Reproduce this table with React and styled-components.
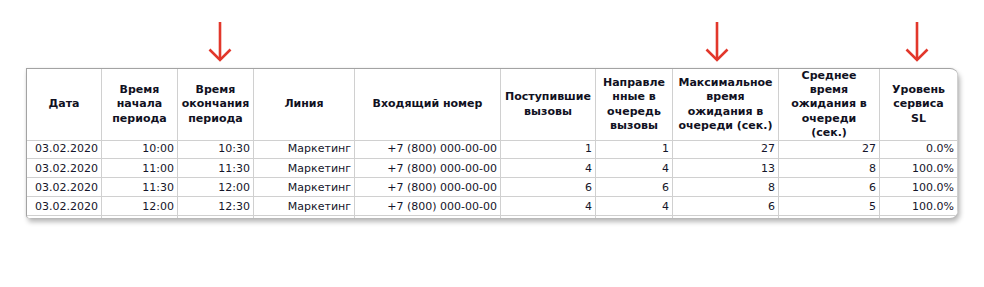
import React from "react";
import styled, { createGlobalStyle } from "styled-components";

const COLS = "75px 76px 76px 101px 146px 95px 77px 106px 101px 78px";

const Global = createGlobalStyle`
  html, body { margin: 0; padding: 0; background: #ffffff; }
  body { font-family: "DejaVu Sans", Verdana, sans-serif; }
`;

const Page = styled.div`
  width: 984px;
  height: 287px;
  box-sizing: border-box;
  padding: 22px 0 0 26px;
  background: #fff;
`;

const ArrowRow = styled.div`
  display: grid;
  grid-template-columns: ${COLS};
  margin-left: 1px;
  height: 40px;
  margin-bottom: 6px;
`;

const ArrowSlot = styled.div`
  grid-column: ${(p) => p.col};
  justify-self: center;
  transform: translateX(${(p) => p.shift}px);
  width: 24px;
  height: 40px;
`;

const Card = styled.div`
  width: 932px;
  height: 150px;
  box-sizing: border-box;
  border-top: 1px solid #a3a3a3;
  border-left: 1px solid #a3a3a3;
  border-radius: 0 8px 8px 3px;
  overflow: hidden;
  background: #fff;
  box-shadow: 2px 4px 5px rgba(0, 0, 0, 0.28), 0 0 3px rgba(0, 0, 0, 0.08);
`;

const Row = styled.div`
  display: grid;
  grid-template-columns: ${COLS};
  height: ${(p) => p.h}px;
`;

const HeadCell = styled.div`
  position: relative;
  box-sizing: border-box;
  border-right: 1px solid #d0d0d0;
  border-bottom: 1px solid #d0d0d0;
  display: flex;
  align-items: center;
  justify-content: center;
  text-align: center;
  font-weight: bold;
  font-size: 11px;
  line-height: 14.2px;
  color: #111122;
  white-space: nowrap;
  padding: 0 1px;
  &::before {
    content: "";
    display: ${(p) => (p.active ? "block" : "none")};
    position: absolute;
    left: -1px;
    right: 0;
    top: -2px;
    height: 2px;
    background: #1f7244;
  }
`;

const Cell = styled.div`
  box-sizing: border-box;
  border-right: 1px solid #d0d0d0;
  border-bottom: 1px solid #d0d0d0;
  display: flex;
  align-items: center;
  justify-content: flex-end;
  padding-right: 3px;
  font-size: 11px;
  color: #15152a;
  white-space: nowrap;
  overflow: hidden;
`;

const Arrow = () => (
  <svg width="24" height="40" viewBox="0 0 24 40">
    <g stroke="#e2372b" strokeWidth="2.6" fill="none" strokeLinecap="butt">
      <line x1="12" y1="0" x2="12" y2="38" />
      <polyline points="1.5,27.5 12,38 22.5,27.5" />
    </g>
  </svg>
);

const headers = [
  ["Дата"],
  ["Время", "начала", "периода"],
  ["Время", "окончания", "периода"],
  ["Линия"],
  ["Входящий номер"],
  ["Поступившие", "вызовы"],
  ["Направле", "нные в", "очередь", "вызовы"],
  ["Максимальное", "время", "ожидания в", "очереди (сек.)"],
  ["Среднее", "время", "ожидания в", "очереди", "(сек.)"],
  ["Уровень", "сервиса", "SL"],
];

const rows = [
  ["03.02.2020", "10:00", "10:30", "Маркетинг", "+7 (800) 000-00-00", "1", "1", "27", "27", "0.0%"],
  ["03.02.2020", "11:00", "11:30", "Маркетинг", "+7 (800) 000-00-00", "4", "4", "13", "8", "100.0%"],
  ["03.02.2020", "11:30", "12:00", "Маркетинг", "+7 (800) 000-00-00", "6", "6", "8", "6", "100.0%"],
  ["03.02.2020", "12:00", "12:30", "Маркетинг", "+7 (800) 000-00-00", "4", "4", "6", "5", "100.0%"],
];

const rowHeights = [20, 19, 19, 19];

export default function App() {
  return (
    <>
      <Global />
      <Page>
        <ArrowRow>
          <ArrowSlot col={3} shift={4}><Arrow /></ArrowSlot>
          <ArrowSlot col={8} shift={-9}><Arrow /></ArrowSlot>
          <ArrowSlot col={10} shift={-2}><Arrow /></ArrowSlot>
        </ArrowRow>
        <Card>
          <Row h={70}>
            {headers.map((lines, i) => (
              <HeadCell key={i} active={i === 4}>
                <span>
                  {lines.map((l, j) => (
                    <React.Fragment key={j}>
                      {j > 0 && <br />}
                      {l}
                    </React.Fragment>
                  ))}
                </span>
              </HeadCell>
            ))}
          </Row>
          {rows.map((r, i) => (
            <Row key={i} h={rowHeights[i]}>
              {r.map((v, j) => (
                <Cell key={j}>{v}</Cell>
              ))}
            </Row>
          ))}
          <Row h={19}>
            {headers.map((_, j) => (
              <Cell key={j} />
            ))}
          </Row>
        </Card>
      </Page>
    </>
  );
}
